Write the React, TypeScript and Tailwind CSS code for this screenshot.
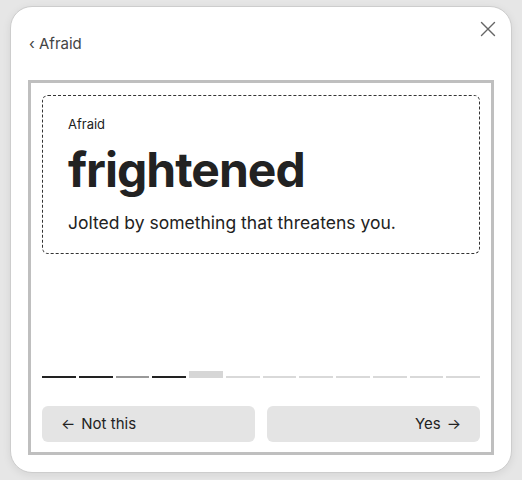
import { X } from "lucide-react";

const segments = ["done", "done", "skip", "done", "current", "todo", "todo", "todo", "todo", "todo", "todo", "todo"];

export default function App() {
  return (
    <div
      className="h-[480px] w-[522px] bg-[#e6e6e6] pt-[6px] pl-[10px]"
      style={{ fontFamily: "Inter, 'Noto Sans', sans-serif" }}
    >
      <div className="relative flex h-[467px] w-[502px] flex-col rounded-[22px] border border-[#cdcdcd] bg-white px-[17px] shadow-[0_2px_8px_rgba(0,0,0,0.08)]">
        <button className="absolute right-[10px] top-[9px] text-[#666]">
          <X className="h-[26px] w-[26px]" strokeWidth={1.3} />
        </button>

        <div className="flex h-[73px] items-center pt-[1px] pl-[1px]">
          <span className="text-[15px] text-[#444]">‹ Afraid</span>
        </div>

        <div className="flex h-[375px] flex-col border-[3px] border-[#bfbfbf] px-[11px] pt-[12px] pb-[10px]">
          <div className="h-[159px] rounded-[6px] border border-dashed border-[#333] pl-[25px] pr-[25px] pt-[19px]">
            <div className="text-[13px] leading-[18px] text-[#222]">Afraid</div>
            <div className="mt-[8px] text-[48px] font-bold leading-[58px] tracking-[-1px] text-[#222]">
              frightened
            </div>
            <div className="mt-[12px] text-[17.5px] leading-[24px] text-[#222]">
              Jolted by something that threatens you.
            </div>
          </div>

          <div className="flex-1" />

          <div className="flex items-end gap-[3px]">
            {segments.map((s, i) => (
              <div
                key={i}
                className={
                  s === "done"
                    ? "h-[2px] flex-1 bg-[#222]"
                    : s === "skip"
                    ? "h-[2px] flex-1 bg-[#999]"
                    : s === "current"
                    ? "h-[7px] flex-1 bg-[#d6d6d6]"
                    : "h-[2px] flex-1 bg-[#d9d9d9]"
                }
              />
            ))}
          </div>

          <div className="mt-[28px] flex gap-[12px]">
            <button className="flex h-[36px] flex-1 items-center gap-[6px] rounded-[6px] bg-[#e4e4e4] px-[19px] text-[15px] text-[#222]">
              <span>←</span>
              <span>Not this</span>
            </button>
            <button className="flex h-[36px] flex-1 items-center justify-end gap-[6px] rounded-[6px] bg-[#e4e4e4] px-[19px] text-[15px] text-[#222]">
              <span>Yes</span>
              <span>→</span>
            </button>
          </div>
        </div>
      </div>
    </div>
  );
}
